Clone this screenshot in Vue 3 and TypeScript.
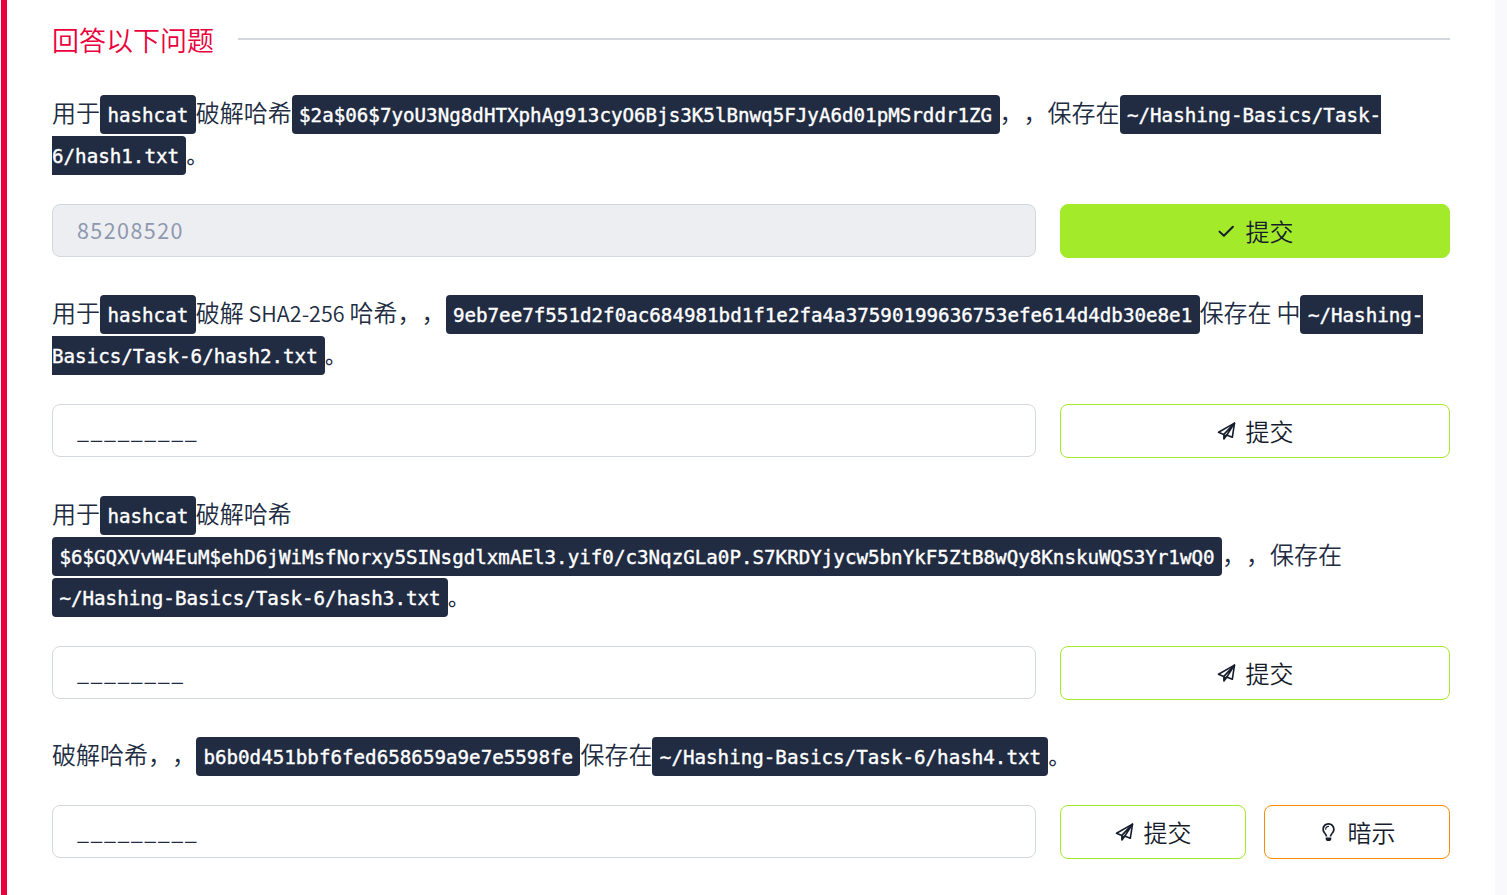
<script setup lang="ts">
import { ref } from 'vue'

type Kind = 'text' | 'latin' | 'stop' | 'code' | 'break'
interface Segment {
  kind: Kind
  text: string[]
}
interface Question {
  id: number
  segments: Segment[]
  answer: string
  solved: boolean
  hint: boolean
}

const t = (s: string): Segment => ({ kind: 'text', text: [s] })
const l = (s: string): Segment => ({ kind: 'latin', text: [s] })
const c = (...s: string[]): Segment => ({ kind: 'code', text: s })
const br: Segment = { kind: 'break', text: [] }
const stop: Segment = { kind: 'stop', text: ['。'] }

const questions = ref<Question[]>([
  {
    id: 1,
    segments: [
      t('用于'), c('hashcat'), t('破解哈希'),
      c('$2a$06$7yoU3Ng8dHTXphAg913cyO6Bjs3K5lBnwq5FJyA6d01pMSrddr1ZG'),
      t('，，保存在'), c('~/Hashing-Basics/Task-', '6/hash1.txt'), stop,
    ],
    answer: '85208520',
    solved: true,
    hint: false,
  },
  {
    id: 2,
    segments: [
      t('用于'), c('hashcat'), t('破解'), l(' SHA2-256 '), t('哈希，，'),
      c('9eb7ee7f551d2f0ac684981bd1f1e2fa4a37590199636753efe614d4db30e8e1'),
      t('保存在'), l(' '), t('中'), c('~/Hashing-', 'Basics/Task-6/hash2.txt'), stop,
    ],
    answer: '_________',
    solved: false,
    hint: false,
  },
  {
    id: 3,
    segments: [
      t('用于'), c('hashcat'), t('破解哈希'), br,
      c('$6$GQXVvW4EuM$ehD6jWiMsfNorxy5SINsgdlxmAEl3.yif0/c3NqzGLa0P.S7KRDYjycw5bnYkF5ZtB8wQy8KnskuWQS3Yr1wQ0'),
      t('，，保存在'), br,
      c('~/Hashing-Basics/Task-6/hash3.txt'), stop,
    ],
    answer: '________',
    solved: false,
    hint: false,
  },
  {
    id: 4,
    segments: [
      t('破解哈希，，'), c('b6b0d451bbf6fed658659a9e7e5598fe'), t('保存在'),
      c('~/Hashing-Basics/Task-6/hash4.txt'), stop,
    ],
    answer: '_________',
    solved: false,
    hint: true,
  },
])
</script>

<template>
  <main class="page">
    <section class="card">
      <header class="heading">
        <h2>回答以下问题</h2>
        <span class="rule"></span>
      </header>
      <article v-for="q in questions" :key="q.id" class="question">
        <p class="prompt">
          <template v-for="(s, i) in q.segments" :key="i">
            <br v-if="s.kind === 'break'" />
            <code v-else-if="s.kind === 'code'"><template v-for="(part, j) in s.text" :key="j"><br v-if="j > 0" />{{ part }}</template></code>
            <span v-else :class="s.kind">{{ s.text[0] }}</span>
          </template>
        </p>
        <div class="row">
          <input v-model="q.answer" type="text" :disabled="q.solved" spellcheck="false" />
          <div class="actions">
            <button type="button" :class="['btn', { solved: q.solved }]">
              <svg v-if="q.solved" class="icon" viewBox="0 0 18 18">
                <path d="M2 9.6 6.4 13.8 15.4 4.8" fill="none" stroke="currentColor" stroke-width="2" stroke-linecap="round" stroke-linejoin="round" />
              </svg>
              <svg v-else class="icon" viewBox="0 0 18 18">
                <g fill="none" stroke="currentColor" stroke-width="1.6" stroke-linecap="round" stroke-linejoin="round">
                  <path d="M6.2 12.4 1 10.2 17 1.1 14.8 15.3 9 12.9" />
                  <path d="M17 1.1 6.4 12.4V17L9.2 13.2Z" />
                </g>
                <path d="M6.4 12.4V17L9.2 13.2Z" fill="currentColor" />
              </svg>
              <span>提交</span>
            </button>
            <button v-if="q.hint" type="button" class="btn hint">
              <svg class="icon" viewBox="0 0 352 512">
                <path fill="currentColor" d="M176 80c-52.94 0-96 43.06-96 96 0 8.84 7.16 16 16 16s16-7.16 16-16c0-35.3 28.72-64 64-64 8.84 0 16-7.16 16-16s-7.16-16-16-16zM96.06 459.17c0 3.15.93 6.22 2.68 8.84l24.51 36.84c2.97 4.46 7.97 7.14 13.32 7.14h78.85c5.36 0 10.36-2.68 13.32-7.14l24.51-36.84c1.74-2.62 2.67-5.7 2.68-8.84l.05-43.18H96.02l.04 43.18zM176 0C73.72 0 0 82.97 0 176c0 44.37 16.45 84.85 43.56 115.78 16.64 18.99 42.74 58.8 52.42 92.16v.06h48v-.12c-.01-4.77-.72-9.51-2.15-14.07-5.59-17.81-22.82-64.86-62.17-109.67-20.54-23.43-31.52-53.15-31.61-84.14-.2-73.64 59.67-128 127.95-128 70.58 0 128 57.42 128 128 0 30.97-11.24 60.85-31.65 84.14-39.11 44.61-56.42 91.47-62.1 109.46a47.507 47.507 0 0 0-2.22 14.3v.1h48v-.05c9.68-33.37 35.78-73.18 52.42-92.16C335.55 260.85 352 220.37 352 176 352 78.8 273.2 0 176 0z" />
              </svg>
              <span>暗示</span>
            </button>
          </div>
        </div>
      </article>
    </section>
  </main>
</template>

<style>
body {
  margin: 0;
  overflow: hidden;
}
</style>

<style scoped>
.page {
  box-sizing: border-box;
  height: 895px;
  padding: 0 12px 0 1px;
  overflow: hidden;
  background: #f9f9fb;
  color: #212c42;
  font-family: "Noto Sans CJK SC", sans-serif;
  font-weight: 350;
  text-spacing-trim: space-all;
}
.card {
  box-sizing: border-box;
  height: 895px;
  padding: 21px 45px 0;
  border-left: 6px solid #ea003c;
  background: #fff;
}
.heading {
  display: flex;
  align-items: center;
  gap: 24px;
  height: 36px;
  margin-bottom: 34px;
}
h2 {
  margin: 0;
  padding-top: 1px;
  color: #ea003c;
  font-size: 27px;
  font-weight: 350;
  line-height: 36px;
}
.rule {
  flex: 1;
  height: 2px;
  background: #d3d6dc;
}
.question {
  margin-bottom: 33.4px;
}
.prompt {
  margin: 0 0 31px;
  font-size: 24px;
  line-height: 41px;
  white-space: nowrap;
}
.latin {
  font-size: 21.5px;
  font-weight: 350;
  letter-spacing: 0.05px;
  line-height: 1;
  white-space: pre;
}
.stop {
  font-weight: 500;
  font-size: 21px;
  line-height: 1;
}
code {
  padding: 9px 7.4px 7px;
  border-radius: 4px;
  background: #212c42;
  color: #fff;
  font-family: "DejaVu Sans Mono", monospace;
  font-size: 19.2px;
  font-weight: 400;
  line-height: 1;
  -webkit-text-stroke: 0.4px #fff;
}
.row {
  display: grid;
  grid-template-columns: 984px 390px;
  gap: 24px;
  align-items: start;
  height: 54px;
}
input {
  box-sizing: border-box;
  width: 100%;
  height: 53px;
  margin: 0;
  padding: 0 24px 2px;
  border: 1px solid #d3d7df;
  border-radius: 8px;
  outline: none;
  background: #fff;
  color: #212c42;
  font-family: "Noto Sans CJK SC", sans-serif;
  font-size: 21.5px;
  font-weight: 400;
  letter-spacing: 1.44px;
}
input:disabled {
  background: #edeef2;
  color: #8e98ae;
}
.actions {
  display: flex;
  gap: 18px;
}
.btn {
  display: flex;
  flex: 1;
  align-items: center;
  justify-content: center;
  gap: 10px;
  box-sizing: border-box;
  height: 54px;
  margin: 0;
  padding: 0;
  border: 1px solid #a3ea2a;
  border-radius: 8px;
  background: #fff;
  color: #151c2b;
  font-family: "Noto Sans CJK SC", sans-serif;
  font-size: 24px;
  font-weight: 350;
  line-height: 36px;
}
.btn.solved {
  background: #a3ea2a;
}
.btn.hint {
  border-color: #ff8b00;
}
.icon {
  width: 19px;
  height: 18px;
}
</style>
